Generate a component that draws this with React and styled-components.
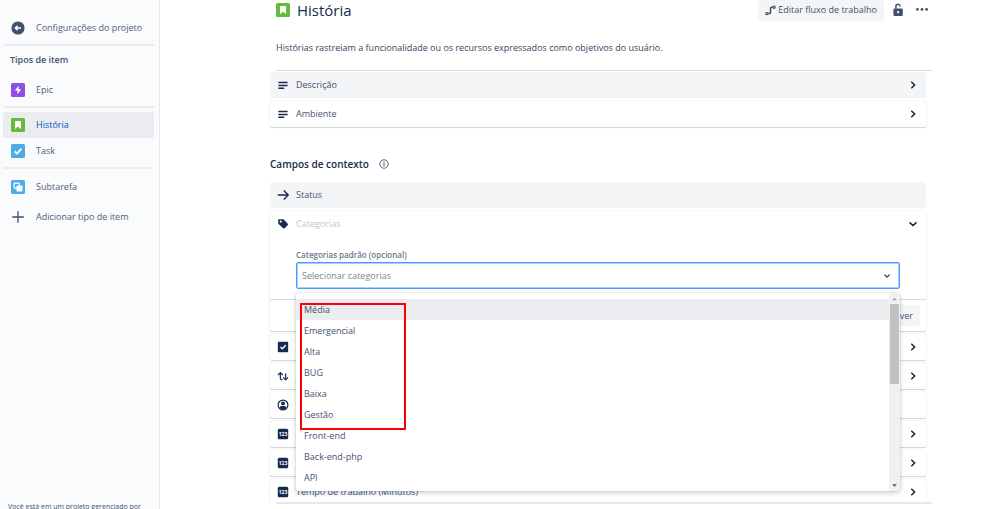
import React from "react";
import styled, { createGlobalStyle } from "styled-components";

const GlobalStyle = createGlobalStyle`
  * {
    box-sizing: border-box;
  }

  body {
    margin: 0;
    background: white;
    color: #42526e;
    font-family: "Open Sans", "Noto Sans", sans-serif;
    font-size: 9px;
    line-height: 12px;
  }

  button,
  input {
    font: inherit;
    color: inherit;
  }

  svg {
    display: block;
    flex: none;
  }
`;

const Page = styled.div`
  display: flex;
  height: 100vh;
  overflow: hidden;
`;

const Sidebar = styled.nav`
  flex: none;
  display: flex;
  flex-direction: column;
  width: 160px;
  padding: 15px 5px 0 3px;
  background: #fafbfc;
  border-right: 1px solid #e6e8ec;
`;

const NavItem = styled.a`
  display: flex;
  align-items: center;
  gap: 11px;
  height: 26px;
  padding-left: 8px;
  border-radius: 2px;
  text-decoration: none;
  white-space: nowrap;
  color: ${props => (props.$active ? "#0052cc" : "#505f79")};
  background: ${props => (props.$active ? "#ebecf0" : "transparent")};
`;

const NavDivider = styled.hr`
  width: 100%;
  height: 2px;
  margin: 3px 0 4px;
  border: 0;
  background: #ebecf0;
`;

const NavTitle = styled.h2`
  margin: 4px 0 11px 7px;
  font-size: 9px;
  line-height: 12px;
  font-weight: 600;
`;

const NavGroup = styled.div`
  display: flex;
  flex-direction: column;
  gap: ${props => (props.$spaced ? "4px" : "0")};
  padding-top: ${props => (props.$spaced ? "1px" : "0")};
`;

const SidebarNote = styled.p`
  height: 8px;
  margin: auto 0 0 5px;
  font-size: 7px;
  white-space: nowrap;
`;

const Main = styled.main`
  flex: 1;
  min-width: 0;
  display: flex;
  flex-direction: column;
  padding: 0 66px 5px 108px;
`;

const Header = styled.header`
  display: flex;
  align-items: center;
  height: 20px;
  padding-left: 8px;
`;

const Title = styled.h1`
  flex: 1;
  margin: 0 0 0 7px;
  color: #172b4d;
  font-size: 15px;
  line-height: 20px;
  font-weight: 500;
`;

const GrayButton = styled.button`
  display: flex;
  align-items: center;
  gap: 2px;
  height: 21px;
  padding: 0 7px;
  border: 0;
  border-radius: 2px;
  background: #f4f5f7;
  font-weight: 500;
  white-space: nowrap;
`;

const IconButton = styled.button`
  display: flex;
  margin-left: 4px;
  padding: 0 3px;
  border: 0;
  background: none;
`;

const Description = styled.p`
  margin: 22px 0 16px 8px;
  color: #344563;
`;

const Line = styled.hr`
  flex: none;
  height: ${props => props.$size || 1}px;
  margin: 0 0 0 8px;
  border: 0;
  background: ${props => (props.$size ? "#e6e8ec" : "#d5d9e0")};
`;

const Fields = styled.div`
  flex: 1;
  min-height: 0;
  padding: 1px 6px 0 2px;
  overflow: hidden;
`;

const FieldList = styled.div`
  display: flex;
  flex-direction: column;
  gap: 3px;
`;

const cardShadow = "0 1px 1px #cfd4dc, 0 0 1px #b3bac5";

const Row = styled.button`
  display: flex;
  align-items: center;
  gap: 6px;
  width: 100%;
  height: 26px;
  padding: 0 6px;
  border: 0;
  border-radius: 2px;
  text-align: left;
  background: ${props => (props.$filled ? "#f4f5f7" : "white")};
  box-shadow: ${props => (props.$filled || props.$plain ? "none" : cardShadow)};
`;

const RowLabel = styled.span`
  flex: 1;
  color: ${props => (props.$muted ? "#c1c7d0" : "#42526e")};
`;

const SectionTitle = styled.h2`
  display: flex;
  align-items: center;
  gap: 10px;
  margin: 29px 0 10px;
  color: #172b4d;
  font-size: 10px;
  line-height: 16px;
  font-weight: 600;
`;

const Card = styled.section`
  border-radius: 2px;
  background: white;
  box-shadow: ${cardShadow};
`;

const CardBody = styled.div`
  padding: 12px 26px 10px;
`;

const FieldLabel = styled.label`
  display: block;
  margin-bottom: 1px;
  color: #6b778c;
  font-size: 8px;
  line-height: 12px;
  font-weight: 600;
`;

const SelectBox = styled.div`
  position: relative;
  display: flex;
  align-items: center;
  height: 27px;
  padding: 0 5px;
  border: 1px solid #4c9aff;
  border-radius: 2px;
  box-shadow: inset 0 0 0 1px #a9ceff;
`;

const SelectInput = styled.input`
  flex: 1;
  min-width: 0;
  padding: 0;
  border: 0;
  outline: 0;
  background: none;

  &::placeholder {
    color: #7a869a;
    opacity: 1;
  }
`;

const Menu = styled.div`
  position: absolute;
  z-index: 1;
  top: 30px;
  left: -1px;
  right: -1px;
  display: flex;
  height: 198px;
  background: white;
  border-radius: 2px;
  box-shadow: 0 0 1px #8993a4, 0 2px 5px rgba(9, 30, 66, 0.22);
`;

const Options = styled.ul`
  flex: 1;
  margin: 0;
  padding: 6px 0 0;
  overflow: hidden;
  list-style: none;
`;

const Option = styled.li`
  padding-left: 8px;
  line-height: 21px;
  background: ${props => (props.$focused ? "#ebecf0" : "white")};
`;

const ScrollTrack = styled.div`
  display: flex;
  flex-direction: column;
  align-items: center;
  width: 11px;
  background: #f1f1f1;
`;

const ScrollThumb = styled.div`
  width: 9px;
  height: 80px;
  margin-bottom: auto;
  background: #c1c1c1;
`;

const Highlight = styled.div`
  position: absolute;
  top: 10px;
  left: 4px;
  width: 106px;
  height: 127px;
  border: 2px solid #ff0000;
`;

const CardFooter = styled.footer`
  display: flex;
  justify-content: flex-end;
  padding: 5px 6px;
  border-top: 1px solid #d5d9e0;
`;

function Tile({ color, children }) {
  return (
    <svg width="14" height="14" viewBox="0 0 14 14" fill="none">
      <rect width="14" height="14" rx="1.5" fill={color} />
      {children}
    </svg>
  );
}

function BackIcon() {
  return (
    <svg width="14" height="14" viewBox="0 0 14 14" fill="none">
      <circle cx="7" cy="7" r="6.6" fill="#42526e" />
      <path d="M10 7H4.4M6.6 4.7 4.3 7l2.3 2.3" stroke="white" strokeWidth="1.4" />
    </svg>
  );
}

function EpicIcon() {
  return (
    <Tile color="#904ee2">
      <path d="M7.6 2.7 3.9 7.6h2.6v3.7l3.7-5H7.6z" fill="white" />
    </Tile>
  );
}

function StoryIcon() {
  return (
    <Tile color="#63ba3c">
      <path d="M4 3h6v8.2L7 8.4l-3 2.8z" fill="white" />
    </Tile>
  );
}

function TaskIcon() {
  return (
    <Tile color="#4bade8">
      <path d="m3.7 7.3 2.3 2.4 4.5-5" stroke="white" strokeWidth="1.9" />
    </Tile>
  );
}

function SubtaskIcon() {
  return (
    <Tile color="#4bade8">
      <rect x="3.1" y="3.1" width="5.2" height="5.2" rx="0.8" stroke="white" strokeWidth="1.2" />
      <rect x="5.5" y="5.5" width="6" height="6" rx="0.8" fill="white" />
    </Tile>
  );
}

function PlusIcon() {
  return (
    <svg width="14" height="14" viewBox="0 0 14 14" fill="none">
      <path d="M7 1.2v11.6M1.2 7h11.6" stroke="#42526e" strokeWidth="1.3" />
    </svg>
  );
}

function FlowIcon() {
  return (
    <svg width="11" height="11" viewBox="0 0 11 11" fill="none" stroke="#42526e" strokeWidth="1.2">
      <circle cx="1.9" cy="8.6" r="1.1" />
      <circle cx="9.1" cy="2.2" r="1.1" />
      <path d="M3.1 8.6h1.1Q5.5 8.6 5.5 7.4v-4Q5.5 2.2 6.8 2.2h1.1" strokeWidth="1.5" />
    </svg>
  );
}

function LockIcon() {
  return (
    <svg width="14" height="14" viewBox="0 0 14 14" fill="none">
      <rect x="2.4" y="5.4" width="9.4" height="7.6" rx="1" fill="#42526e" />
      <path d="M4.9 5.8V3.4a2.1 2.1 0 0 1 4.2 0" stroke="#42526e" strokeWidth="1.5" />
      <circle cx="7.1" cy="9.2" r="1.1" fill="white" />
    </svg>
  );
}

function MoreIcon() {
  return (
    <svg width="14" height="14" viewBox="0 0 14 14" fill="#42526e">
      <circle cx="2.4" cy="6.4" r="1.4" />
      <circle cx="7" cy="6.4" r="1.4" />
      <circle cx="11.6" cy="6.4" r="1.4" />
    </svg>
  );
}

function Chevron({ down, small }) {
  return (
    <svg
      width="14"
      height="14"
      viewBox="0 0 14 14"
      fill="none"
      stroke={small ? "#42526e" : "#172b4d"}
      strokeWidth={small ? 1.4 : 1.6}
      strokeLinecap="round"
    >
      {small && <path d="m4.8 6 2.2 2.1L9.2 6" />}
      {down && !small && <path d="m4 5.8 3 2.7 3-2.7" />}
      {!down && <path d="m5.8 4.2 2.8 2.8-2.8 2.8" />}
    </svg>
  );
}

function InfoIcon() {
  return (
    <svg width="10" height="10" viewBox="0 0 10 10" fill="none" stroke="#42526e">
      <circle cx="5" cy="5" r="4.2" strokeWidth="0.9" />
      <path d="M5 4.3v3M5 2.5v1" strokeWidth="1.1" />
    </svg>
  );
}

// icons of the field rows, all drawn on a 14px grid
const glyphs = {
  text: (
    <path
      d="M2.4 4.5h9.2M2.4 7.5h9.2M2.4 10.2h5.8"
      stroke="#172b4d"
      strokeWidth="1.4"
    />
  ),
  arrow: (
    <path d="M1.7 7h10.4M7.8 2.6 12.2 7l-4.4 4.4" stroke="#172b4d" strokeWidth="1.4" />
  ),
  tag: (
    <path
      d="M3 2.2h3.8q.5 0 .9.4l4.1 4.2q.6.7 0 1.3l-3.2 3.2q-.7.6-1.4 0L2.6 7q-.4-.4-.4-.9V3q0-.8.8-.8zM4.7 3.5a1.1 1.1 0 1 0 0 2.2 1.1 1.1 0 0 0 0-2.2z"
      fill="#172b4d"
      fillRule="evenodd"
    />
  ),
  checkbox: (
    <>
      <rect x="1.8" y="1.8" width="10.4" height="10.4" rx="1.2" fill="#172b4d" />
      <path d="m4.5 7 1.8 1.8 3.4-3.6" stroke="white" strokeWidth="1.4" />
    </>
  ),
  sort: (
    <path
      d="M4.4 10V4M2 6l2.4-2.4L6.8 6M4.4 9.6q0 1 1 1h1.2M9.6 4.6v6M7.2 8.4l2.4 2.4 2.4-2.4"
      stroke="#253858"
      strokeWidth="1.3"
    />
  ),
  person: (
    <>
      <circle cx="7" cy="7" r="4.9" stroke="#172b4d" strokeWidth="1.2" />
      <circle cx="7" cy="5.4" r="1.9" fill="#172b4d" />
      <path d="M3.6 9.8Q3.8 7.9 5.4 7.9h3.2q1.6 0 1.8 1.9Q9 11.5 7 11.5T3.6 9.8z" fill="#172b4d" />
    </>
  ),
  number: (
    <>
      <rect x="1.8" y="1.8" width="10.4" height="10.4" rx="1.5" fill="#172b4d" />
      <text x="7" y="8.9" fill="white" fontSize="5" fontWeight="700" textAnchor="middle">
        123
      </text>
    </>
  )
};

function FieldRow({ icon, label, muted, filled, plain, open, noArrow }) {
  return (
    <Row type="button" $filled={filled} $plain={plain}>
      <svg width="14" height="14" viewBox="0 0 14 14" fill="none">
        {glyphs[icon]}
      </svg>
      <RowLabel $muted={muted}>{label}</RowLabel>
      {!noArrow && <Chevron down={open} />}
    </Row>
  );
}

const categories = [
  "Média",
  "Emergencial",
  "Alta",
  "BUG",
  "Baixa",
  "Gestão",
  "Front-end",
  "Back-end-php",
  "API"
];

const moreFields = [
  { icon: "checkbox" },
  { icon: "sort" },
  { icon: "person", noArrow: true },
  { icon: "number" },
  { icon: "number" },
  { icon: "number", label: "Tempo de trabalho (Minutos)" }
];

function CategorySelect() {
  return (
    <SelectBox>
      <SelectInput
        id="categories"
        role="combobox"
        aria-expanded="true"
        aria-controls="category-options"
        placeholder="Selecionar categorias"
      />
      <Chevron down small />
      <Menu>
        <Options id="category-options" role="listbox">
          {categories.map((name, i) => (
            <Option key={name} role="option" $focused={i === 0}>
              {name}
            </Option>
          ))}
        </Options>
        <ScrollTrack>
          <svg width="11" height="11" viewBox="0 0 11 11">
            <path d="M3.2 7.3h4.6L5.5 4.7z" fill="#a3a3a3" />
          </svg>
          <ScrollThumb />
          <svg width="11" height="11" viewBox="0 0 11 11">
            <path d="M3.2 4.2h4.6L5.5 6.8z" fill="#505050" />
          </svg>
        </ScrollTrack>
        <Highlight />
      </Menu>
    </SelectBox>
  );
}

export default function App() {
  return (
    <Page>
      <GlobalStyle />
      <Sidebar>
        <NavItem href="#settings">
          <BackIcon />
          Configurações do projeto
        </NavItem>
        <NavDivider />
        <NavTitle>Tipos de item</NavTitle>
        <NavItem href="#epic">
          <EpicIcon />
          Epic
        </NavItem>
        <NavDivider />
        <NavGroup>
          <NavItem href="#story" $active>
            <StoryIcon />
            História
          </NavItem>
          <NavItem href="#task">
            <TaskIcon />
            Task
          </NavItem>
        </NavGroup>
        <NavDivider />
        <NavGroup $spaced>
          <NavItem href="#subtask">
            <SubtaskIcon />
            Subtarefa
          </NavItem>
          <NavItem href="#add">
            <PlusIcon />
            Adicionar tipo de item
          </NavItem>
        </NavGroup>
        <SidebarNote>Você está em um projeto gerenciado por</SidebarNote>
      </Sidebar>
      <Main>
        <Header>
          <StoryIcon />
          <Title>História</Title>
          <GrayButton type="button">
            <FlowIcon />
            Editar fluxo de trabalho
          </GrayButton>
          <IconButton type="button" aria-haspopup="true">
            <LockIcon />
          </IconButton>
          <IconButton type="button" aria-haspopup="true">
            <MoreIcon />
          </IconButton>
        </Header>
        <Description>
          Histórias rastreiam a funcionalidade ou os recursos expressados como
          objetivos do usuário.
        </Description>
        <Line />
        <Fields>
          <FieldList>
            <FieldRow icon="text" label="Descrição" filled />
            <FieldRow icon="text" label="Ambiente" />
          </FieldList>
          <SectionTitle>
            Campos de contexto
            <InfoIcon />
          </SectionTitle>
          <FieldList>
            <FieldRow icon="arrow" label="Status" filled noArrow />
            <Card>
              <FieldRow icon="tag" label="Categorias" muted plain open />
              <CardBody>
                <FieldLabel htmlFor="categories">
                  Categorias padrão (opcional)
                </FieldLabel>
                <CategorySelect />
              </CardBody>
              <CardFooter>
                <GrayButton type="button">Remover</GrayButton>
              </CardFooter>
            </Card>
            {moreFields.map((field, i) => (
              <FieldRow key={i} {...field} />
            ))}
          </FieldList>
        </Fields>
        <Line $size={2} />
      </Main>
    </Page>
  );
}
